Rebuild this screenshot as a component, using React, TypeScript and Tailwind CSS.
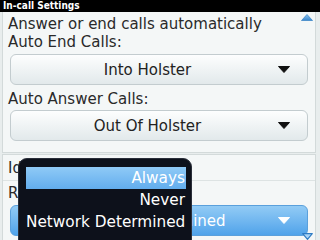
import React from "react";

const font = "font-['DejaVu_Sans','Liberation_Sans',sans-serif]";

function Arrow({ white }: { white?: boolean }) {
  return (
    <svg width="12" height="7" viewBox="0 0 12 7" className="shrink-0">
      <path d="M0.5 0.5 L11.5 0.5 L6 6.5 Z" fill={white ? "#ffffff" : "#111111"} strokeLinejoin="round" stroke={white ? "#ffffff" : "#111111"} strokeWidth="1" />
    </svg>
  );
}

function Dropdown({ label, blue }: { label: string; blue?: boolean }) {
  return (
    <div
      className={
        "mx-[7px] h-[31px] rounded-[6px] border flex items-center pl-[6px] pr-[17px] " +
        (blue
          ? "bg-gradient-to-b from-[#92cbf5] to-[#4fa3ea] border-[#5aa0dc] text-white"
          : "bg-gradient-to-b from-[#fdfefe] to-[#e2e9eb] border-[#c3cccf] text-[#222]")
      }
    >
      <span className="flex-1 text-center text-[15px] leading-[18px] whitespace-nowrap">{label}</span>
      <Arrow white={blue} />
    </div>
  );
}

export default function App() {
  return (
    <div className={"relative w-[320px] h-[240px] overflow-hidden bg-[#e8eded] " + font}>
      <div className="h-[12px] bg-black text-white pl-[3px] text-[10px] leading-[12px] font-bold font-['DejaVu_Sans_Condensed','DejaVu_Sans',sans-serif] whitespace-nowrap">
        In-call Settings
      </div>
      <div className="ml-[2px] w-[314px] flex flex-col">
        <div className="h-[141px] bg-[#f4f7f7] border-x border-b border-[#d3dada] pt-[3px] pl-0 text-[15px] leading-[18px] text-[#2a2a2a]">
          <div className="pl-[5px] whitespace-nowrap">Answer or end calls automatically</div>
          <div className="pl-[5px] whitespace-nowrap">Auto End Calls:</div>
          <div className="mt-[3px]">
            <Dropdown label="Into Holster" />
          </div>
          <div className="pl-[5px] mt-[5px] whitespace-nowrap">Auto Answer Calls:</div>
          <div className="mt-[2px]">
            <Dropdown label="Out Of Holster" />
          </div>
        </div>
        <div className="h-[90px] mt-[1px] bg-[#f4f7f7] border-x border-t border-[#d3dada] pt-[4px] text-[15px] leading-[18px] text-[#2a2a2a]">
          <div className="pl-[5px] whitespace-nowrap">Identity</div>
          <div className="mt-[3px] border-t border-[#dde3e3]" />
          <div className="pl-[5px] mt-[3px] whitespace-nowrap">Restrict My Identity:</div>
          <div className="mt-[3px]">
            <Dropdown label="Network Determined" blue />
          </div>
        </div>
      </div>

      <svg className="absolute left-[301px] top-[14px]" width="12" height="7" viewBox="0 0 12 7">
        <defs>
          <linearGradient id="ua" x1="0" y1="0" x2="0" y2="1">
            <stop offset="0" stopColor="#8cc4f0" />
            <stop offset="1" stopColor="#3a86cc" />
          </linearGradient>
        </defs>
        <path d="M6 0.5 L11.5 6.5 L0.5 6.5 Z" fill="url(#ua)" stroke="#3f88c8" strokeWidth="0.8" strokeLinejoin="round" />
      </svg>
      <svg className="absolute left-[302px] top-[233px]" width="11" height="7" viewBox="0 0 11 7">
        <path d="M0.7 0.7 L10.3 0.7 L5.5 6.3 Z" fill="#a9d3f5" stroke="#2f7cc4" strokeWidth="1.2" strokeLinejoin="round" />
      </svg>

      <div className="absolute left-[18px] top-[158px] w-[174px] h-[92px] rounded-[9px] bg-[#0d111b] border border-[#2a2f3a] pt-[8px] pl-[7px] pr-[5px] text-white text-[15.3px] leading-[22px]">
        <div className="h-[22px] text-right pr-[1px] bg-gradient-to-b from-[#8fcaf6] to-[#62adee] whitespace-nowrap">Always</div>
        <div className="h-[22px] text-right pr-[1px] whitespace-nowrap">Never</div>
        <div className="h-[22px] text-right pr-[1px] whitespace-nowrap">Network Determined</div>
      </div>
    </div>
  );
}
